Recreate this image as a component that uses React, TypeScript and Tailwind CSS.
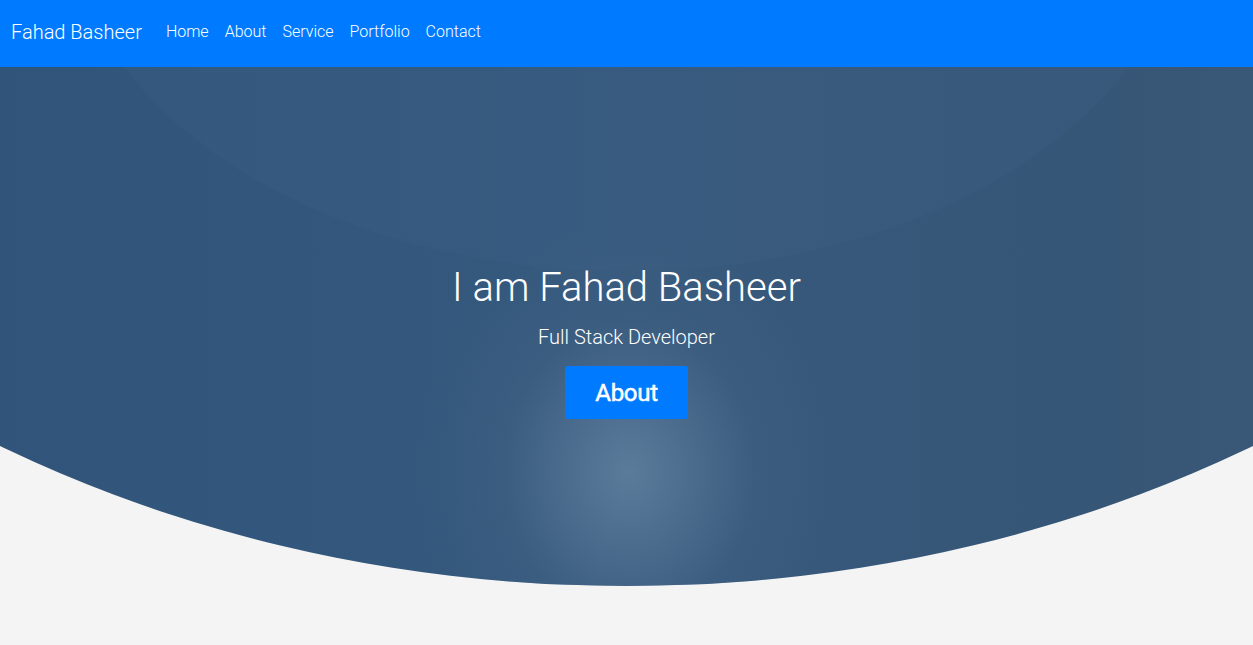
import React from "react";

const heroBg = [
  "radial-gradient(ellipse 210px 250px at 50.2% 405px, rgba(100,132,162,0.8) 0%, rgba(90,121,152,0.6) 30%, rgba(70,102,136,0.3) 60%, rgba(51,85,122,0) 100%)",
  "radial-gradient(ellipse 560px 365px at 50% -160px, rgba(62,98,136,0.22) 99.5%, rgba(62,98,136,0) 100%)",
  "linear-gradient(90deg, #31557a 0%, #33577c 20%, #35597d 45%, #37587a 65%, #365677 85%, #395776 100%)",
].join(", ");

export default function App() {
  return (
    <div
      className="min-h-[645px] w-full bg-[#f4f4f4]"
      style={{ fontFamily: "Roboto, 'Liberation Sans', sans-serif" }}
    >
      <nav className="flex h-[67px] items-center bg-[#007bff] pb-[3px] pl-[11px] text-white">
        <span className="mr-[16px] text-[20px] font-light leading-[30px]">Fahad Basheer</span>
        <ul className="flex items-center">
          {["Home", "About", "Service", "Portfolio", "Contact"].map((l) => (
            <li key={l} className="px-[8px] text-[16px] font-light leading-[24px]">
              {l}
            </li>
          ))}
        </ul>
      </nav>
      <section
        className="flex h-[519px] flex-col items-center pt-[197px] text-white"
        style={{
          background: heroBg,
          clipPath: "ellipse(1200px 952px at 50% -433px)",
        }}
      >
        <h1 className="mb-[10px] text-[40px] font-light leading-[48px]">I am Fahad Basheer</h1>
        <p className="text-[20px] font-light leading-[30px]">Full Stack Developer</p>
        <button className="mt-[14px] flex h-[53px] w-[123px] items-center justify-center rounded-[3px] bg-[#007bff] text-[24px] font-normal leading-[36px] tracking-[-0.3px] text-white [-webkit-text-stroke:0.5px_white]">
          About
        </button>
      </section>
    </div>
  );
}
